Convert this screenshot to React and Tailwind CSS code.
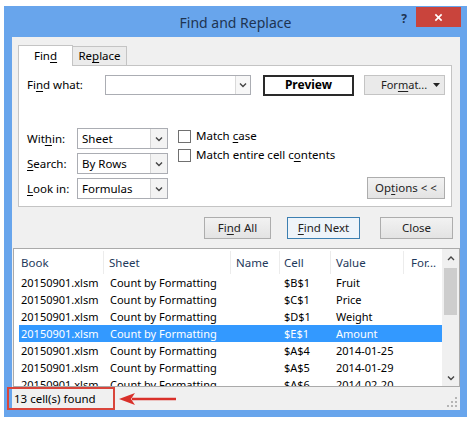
import React from "react";

const font = { fontFamily: '"Noto Sans", "Open Sans", sans-serif' };

function Chevron({ up = false, className = "" }) {
  return (
    <svg width="8" height="6" viewBox="0 0 8 6" className={className}>
      <polyline
        points={up ? "1,5 4,2 7,5" : "1,1.5 4,4.5 7,1.5"}
        fill="none"
        stroke="#444"
        strokeWidth="1.4"
      />
    </svg>
  );
}

function U({ children }) {
  return <span className="underline underline-offset-2">{children}</span>;
}

function Select({ value }) {
  return (
    <div className="flex h-[21px] w-[91px] border border-[#abadb3] bg-white">
      <div className="flex flex-1 items-center pl-[4px] text-[11.5px] text-black">{value}</div>
      <div className="flex w-[17px] items-center justify-center border-l border-[#d5d5d5] bg-[#f3f3f3]">
        <Chevron />
      </div>
    </div>
  );
}

function Checkbox({ children }) {
  return (
    <div className="flex h-[14px] items-center gap-[5px] text-[11.5px] leading-[14px] text-black">
      <div className="h-[13px] w-[13px] border border-[#707070] bg-white" />
      <span>{children}</span>
    </div>
  );
}

function Btn({ w, children, def = false }) {
  return (
    <div
      className={
        "flex h-[22px] items-center justify-center border text-[11.5px] text-[#222] " +
        (def
          ? "border-[#3c7fb1] bg-[#eef4fa]"
          : "border-[#adadad] bg-gradient-to-b from-[#f2f2f2] to-[#e3e3e3]")
      }
      style={{ width: w }}
    >
      {children}
    </div>
  );
}

const rows = [
  ["$B$1", "Fruit"],
  ["$C$1", "Price"],
  ["$D$1", "Weight"],
  ["$E$1", "Amount", true],
  ["$A$4", "2014-01-25"],
  ["$A$5", "2014-01-29"],
  ["$A$6", "2014-02-20"],
];

export default function App() {
  return (
    <div className="relative h-[424px] w-[474px] overflow-hidden bg-white pl-[4px] pt-[6px]" style={font}>
      <div className="flex h-[411px] w-[463px] flex-col bg-[#68a5ec]">
        {/* Title bar */}
        <div className="grid h-[31px] grid-cols-[1fr_auto_1fr]">
          <div />
          <div className="flex items-center pt-[2px] text-[14px] text-[#1e3452]">Find and Replace</div>
          <div className="flex items-start justify-end pr-[6px] pt-[1px]">
            <div className="mr-[9px] mt-[3px] text-[12px] font-bold text-[#1e3452]">?</div>
            <div className="flex h-[20px] w-[45px] items-center justify-center bg-[#c9443c]">
              <svg width="9" height="9" viewBox="0 0 10 10">
                <path d="M1.5 1.5 L8.5 8.5 M8.5 1.5 L1.5 8.5" stroke="white" strokeWidth="1.8" />
              </svg>
            </div>
          </div>
        </div>

        {/* Content */}
        <div className="ml-[8px] mr-[7px] flex h-[373px] flex-col bg-[#f0f0f0]">
          {/* Tabs */}
          <div className="ml-[6px] flex h-[28px] items-end pt-[8px]">
            <div className="relative z-10 -mb-px flex h-[21px] w-[55px] items-center justify-center border border-b-0 border-[#c4c4c4] bg-white text-[11.5px] text-black">
              Fin<U>d</U>
            </div>
            <div className="flex h-[19px] w-[54px] items-center justify-center border border-b-0 border-l-0 border-[#c4c4c4] bg-[#ebebeb] text-[11.5px] text-black">
              Re<U>p</U>lace
            </div>
          </div>

          {/* Panel */}
          <div className="ml-[6px] flex h-[142px] w-[434px] flex-col border border-[#c4c4c4] bg-white pl-[8px] pt-[9px]">
            <div className="flex h-[20px] items-center">
              <div className="w-[78px] text-[11.5px] text-black">
                Fi<U>n</U>d what:
              </div>
              <div className="flex h-[20px] w-[146px] border border-[#abadb3] bg-white">
                <div className="flex-1" />
                <div className="flex w-[15px] items-center justify-center border-l border-[#d9d9d9] bg-[#f7f7f7]">
                  <Chevron />
                </div>
              </div>
              <div className="ml-[12px] flex h-[21px] w-[91px] items-center justify-center border-2 border-[#2a2a2a] bg-white text-[12px] font-bold text-black">
                Preview
              </div>
              <div className="ml-[10px] flex h-[20px] w-[81px] items-center border border-[#c4c4c4] bg-[#eaeaea] pl-[16px] text-[11px] text-[#222]">
                <span className="flex-1">
                  For<U>m</U>at...
                </span>
                <svg width="7" height="4" viewBox="0 0 7 4" className="mr-[4px]">
                  <path d="M0 0 L7 0 L3.5 4 Z" fill="#222" />
                </svg>
              </div>
            </div>

            <div className="mt-[33px] flex">
              <div className="flex flex-col gap-[4px]">
                {[
                  [<>Wit<U>h</U>in:</>, "Sheet"],
                  [<><U>S</U>earch:</>, "By Rows"],
                  [<><U>L</U>ook in:</>, "Formulas"],
                ].map(([label, v], i) => (
                  <div key={i} className="flex items-center">
                    <div className="w-[50px] text-[11.5px] text-black">{label}</div>
                    <Select value={v} />
                  </div>
                ))}
              </div>
              <div className="ml-[10px] flex flex-col gap-[5px] pt-[1px]">
                <Checkbox>
                  Match <U>c</U>ase
                </Checkbox>
                <Checkbox>
                  Match entire cell c<U>o</U>ntents
                </Checkbox>
              </div>
              <div className="ml-auto mr-[6px] flex items-end">
                <div className="flex h-[22px] w-[78px] items-center justify-center border border-[#adadad] bg-gradient-to-b from-[#f2f2f2] to-[#e3e3e3] text-[11.5px] text-[#222]">
                  Op<U>t</U>ions &lt; &lt;
                </div>
              </div>
            </div>
          </div>

          {/* Buttons */}
          <div className="mt-[10px] flex h-[22px] justify-end pr-[7px]">
            <Btn w={67}>
              Fi<U>n</U>d All
            </Btn>
            <div className="w-[16px]" />
            <Btn w={73} def>
              <U>F</U>ind Next
            </Btn>
            <div className="w-[20px]" />
            <Btn w={73}>Close</Btn>
          </div>

          {/* List */}
          <div className="ml-px mt-[9px] flex h-[139px] border border-[#aaaaaa] bg-white">
            <div className="flex flex-1 flex-col overflow-hidden">
              <div className="flex h-[25px] shrink-0 items-center pt-[2px] text-[11.5px] text-[#1e395b]">
                <div className="w-[89px] pl-[7px]">Book</div>
                <div className="h-full w-[127px] border-l border-[#ececec] pl-[5px] leading-[23px]">Sheet</div>
                <div className="h-full w-[49px] border-l border-[#ececec] pl-[5px] leading-[23px]">Name</div>
                <div className="h-full w-[51px] border-l border-[#ececec] pl-[4px] leading-[23px]">Cell</div>
                <div className="h-full w-[73px] border-l border-[#ececec] pl-[5px] leading-[23px]">Value</div>
                <div className="h-full flex-1 border-l border-[#ececec] pl-[7px] leading-[23px]">For...</div>
              </div>
              {rows.map(([cell, val, sel], i) => (
                <div
                  key={i}
                  className={
                    "ml-[5px] flex h-[17px] shrink-0 items-center pt-px text-[11px] leading-[16px] " +
                    (sel ? "bg-[#3399ff] text-white" : "text-black")
                  }
                >
                  <div className="w-[84px] pl-[2px]">20150901.xlsm</div>
                  <div className="w-[127px] pl-[7px]">Count by Formatting</div>
                  <div className="w-[49px]" />
                  <div className="w-[51px] pl-[5px]">{cell}</div>
                  <div className="w-[73px] pl-[6px]">{val}</div>
                </div>
              ))}
            </div>
            <div className="flex w-[17px] flex-col items-center bg-[#f0f0f0]">
              <div className="flex h-[17px] w-full items-center justify-center">
                <Chevron up />
              </div>
              <div className="mt-[2px] h-[47px] w-[13px] bg-[#cdcdcd]" />
              <div className="flex-1" />
              <div className="flex h-[17px] w-full items-center justify-center">
                <Chevron />
              </div>
            </div>
          </div>

          {/* Status bar */}
          <div className="relative flex h-[23px] items-center pl-[2px] text-[11.5px] text-black">
            <span>13 cell(s) found</span>
            <div className="flex-1" />
            <svg width="12" height="12" viewBox="0 0 12 12" className="mr-[2px] mt-[6px]">
              {[
                [9, 1],
                [9, 5],
                [5, 5],
                [9, 9],
                [5, 9],
                [1, 9],
              ].map(([x, y], i) => (
                <rect key={i} x={x} y={y} width="2" height="2" fill="#b5b5b5" />
              ))}
            </svg>
          </div>
        </div>
      </div>

      {/* Annotation overlay */}
      <div className="absolute left-[7px] top-[387px] h-[23px] w-[108px] border-2 border-[#d9453b]" />
      <svg className="absolute left-[118px] top-[392px]" width="60" height="14" viewBox="0 0 60 14">
        <path d="M58 7 L14 7" stroke="#d9302a" strokeWidth="2.5" />
        <path d="M1 7 L17 1 L13 7 L17 13 Z" fill="#d9302a" />
      </svg>
    </div>
  );
}
